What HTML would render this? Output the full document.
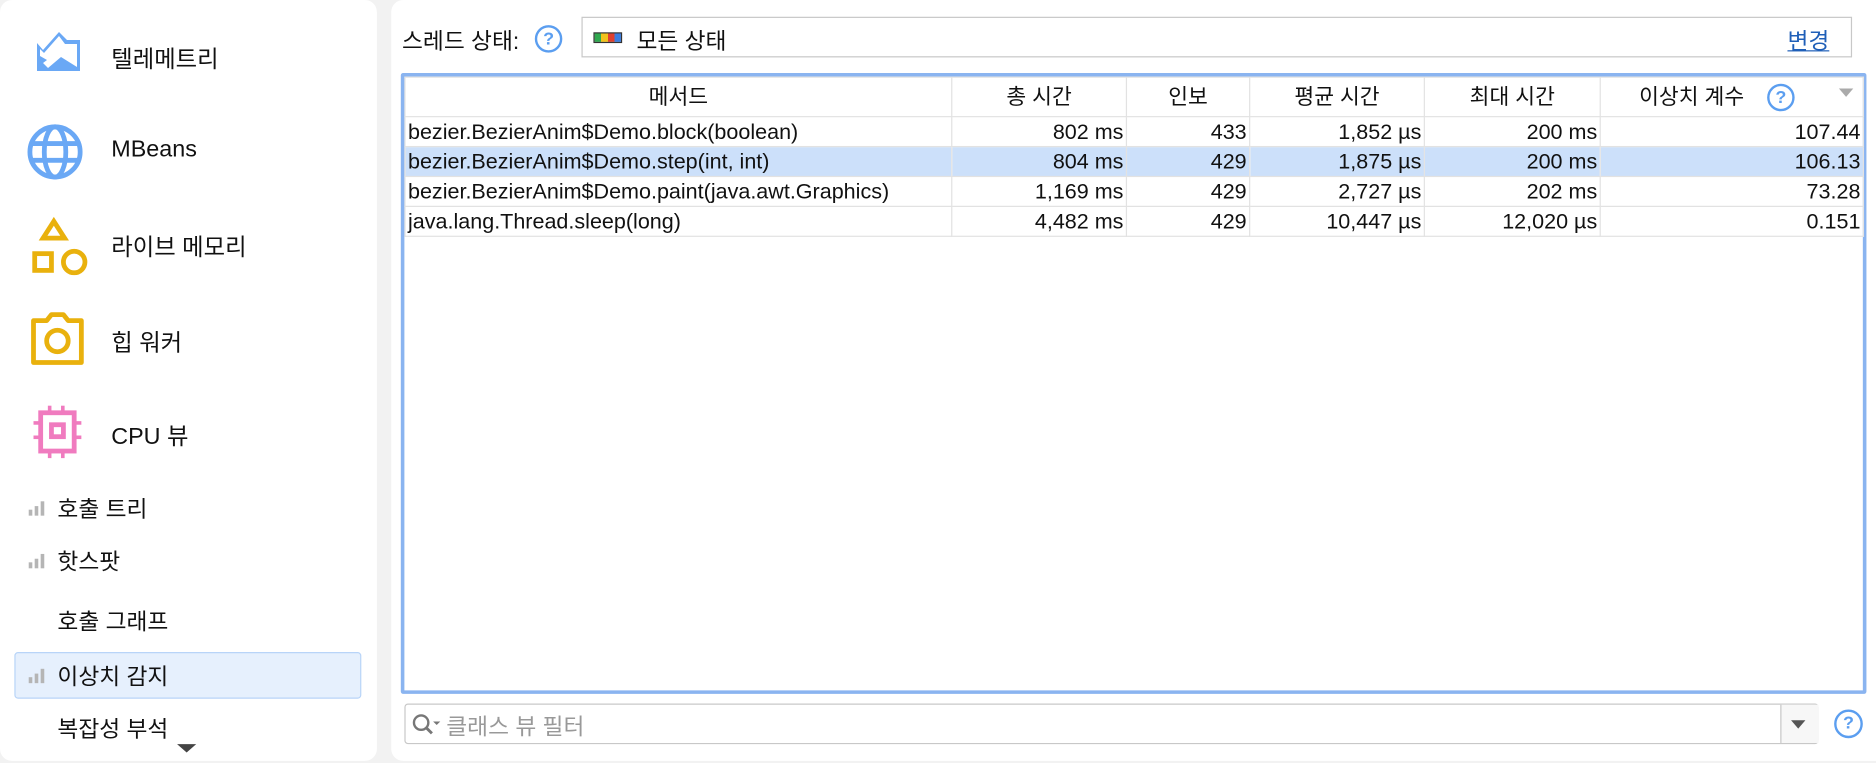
<!DOCTYPE html>
<html><head><meta charset="utf-8"><style>
html,body{margin:0;padding:0;width:1876px;height:763px;overflow:hidden;background:#f2f2f2}
#w{position:absolute;left:0;top:0;width:1568px;height:638px;transform:scale(1.19643);transform-origin:0 0;font-family:"Liberation Sans","Noto Sans CJK KR",sans-serif;color:#111}
.a{position:absolute}
.lp{left:0;top:0;width:315px;height:636px;background:#fff;border-radius:10px}
.rp{left:327px;top:0;width:1241px;height:636px;background:#fff;border-radius:10px 0 0 10px}
.big{font-size:19.5px;left:93px}
.sub{font-size:19px;left:48px}
.bars{left:24px;width:14px;height:12px}
.bars i{position:absolute;bottom:0;width:3px;background:#b5b5b5}
table{border-collapse:collapse;font-size:18px;table-layout:fixed}
td,th{border:1px solid #e2e2e2;padding:0 2px;height:24px;line-height:24px;white-space:nowrap;overflow:hidden}
th{font-weight:normal;height:32px;font-size:18px}
td.r{text-align:right}
tr.sel td{background:#cce0fa}
.q{border:2px solid #5b9ef0;border-radius:50%;color:#5b9ef0;font-size:15px;font-weight:bold;text-align:center;box-sizing:border-box}
</style></head><body><div id="w">
<div class="a lp"></div><div class="a rp"></div>

<svg class="a" style="left:0;top:0" width="83.6" height="75.2" viewBox="0 0 100 90"><path d="M37 43 L43 50 L59 32 L67 40 L80 40 L80 71 L37 71Z" fill="#6aa8f5"/><path d="M40 49 L44 53 L59 36 L65 44 L77 44 L77 67 L61 57 L48 68 L43 63 L47 60 L40 56Z" fill="#fff"/></svg>
<div class="a big" style="top:33px">텔레메트리</div>

<svg class="a" style="left:22px;top:103px" width="48" height="48" viewBox="0 0 48 48"><g fill="none" stroke="#6aa8f5" stroke-width="4"><circle cx="24" cy="24" r="21"/><ellipse cx="24" cy="24" rx="9" ry="21"/><line x1="3" y1="17" x2="45" y2="17"/><line x1="3" y1="31" x2="45" y2="31"/></g></svg>
<div class="a big" style="top:114px">MBeans</div>

<svg class="a" style="left:24px;top:180px" width="50" height="52" viewBox="0 0 50 52"><g fill="none" stroke="#e9b10d" stroke-width="4"><path d="M21 5 L30 19 L12 19 Z"/><rect x="5" y="32" width="14" height="14"/><circle cx="38" cy="39" r="9"/></g></svg>
<div class="a big" style="top:190px">라이브 메모리</div>

<svg class="a" style="left:24px;top:260px" width="50" height="50" viewBox="0 0 50 50"><g fill="none" stroke="#e9b10d" stroke-width="4"><path d="M4 8 L15 8 L19 3 L29 3 L33 8 L44 8 L44 43 L4 43 Z" stroke-linejoin="round"/><circle cx="24" cy="25" r="9"/></g></svg>
<div class="a big" style="top:270px">힙 워커</div>

<svg class="a" style="left:26px;top:339px" width="44" height="44" viewBox="0 0 44 44"><g fill="#f07bbf"><rect x="8" y="6" width="28" height="32" fill="none" stroke="#f07bbf" stroke-width="4"/><rect x="17" y="16" width="10" height="10" fill="none" stroke="#f07bbf" stroke-width="4"/><rect x="14" y="0" width="3" height="6"/><rect x="25" y="0" width="3" height="6"/><rect x="14" y="38" width="3" height="6"/><rect x="25" y="38" width="3" height="6"/><rect x="2" y="13" width="6" height="3"/><rect x="2" y="25" width="6" height="3"/><rect x="36" y="13" width="6" height="3"/><rect x="36" y="25" width="6" height="3"/></g></svg>
<div class="a big" style="top:348px">CPU 뷰</div>

<div class="a bars" style="top:419px"><i style="left:0;height:5px"></i><i style="left:5px;height:8px"></i><i style="left:10px;height:12px"></i></div>
<div class="a sub" style="top:411px">호출 트리</div>
<div class="a bars" style="top:463px"><i style="left:0;height:5px"></i><i style="left:5px;height:8px"></i><i style="left:10px;height:12px"></i></div>
<div class="a sub" style="top:455px">핫스팟</div>
<div class="a sub" style="top:505px">호출 그래프</div>
<div class="a" style="left:12px;top:545px;width:288px;height:37px;background:#e6f0fd;border:1px solid #b8d4f8;border-radius:3px"></div>
<div class="a bars" style="top:559px"><i style="left:0;height:5px"></i><i style="left:5px;height:8px"></i><i style="left:10px;height:12px"></i></div>
<div class="a sub" style="top:551px">이상치 감지</div>
<div class="a" style="left:48px;top:595px;height:25px;overflow:hidden;font-size:19px;width:200px">복잡성 부석</div>
<div class="a" style="left:148px;top:622px;width:0;height:0;border-left:8px solid transparent;border-right:8px solid transparent;border-top:7px solid #444"></div>

<div class="a" style="left:336px;top:20px;font-size:19px">스레드 상태:</div>
<div class="a q" style="left:447px;top:21px;width:23px;height:23px;line-height:19px">?</div>
<div class="a" style="left:486px;top:14px;width:1062px;height:34px;border:1px solid #c8c8c8;box-sizing:border-box"></div>
<div class="a" style="left:496px;top:27px;width:24px;height:9px;border:1px solid #333;box-sizing:border-box;background:linear-gradient(90deg,#2fa84f 0 25%,#f2c21b 25% 50%,#e0402e 50% 75%,#3b7de0 75%)"></div>
<div class="a" style="left:532px;top:20px;font-size:19px">모든 상태</div>
<div class="a" style="left:1494px;top:20px;font-size:19px;color:#1f5fb8;text-decoration:underline">변경</div>

<div class="a" style="left:335px;top:61px;width:1225px;height:519px;border:3px solid #8ab4f0;box-sizing:border-box;border-radius:2px"></div>
<table class="a" style="left:338px;top:64px;width:1219px">
<colgroup><col style="width:457px"><col style="width:146px"><col style="width:103px"><col style="width:146px"><col style="width:147px"><col style="width:220px"></colgroup>
<tr><th>메서드</th><th>총 시간</th><th>인보</th><th>평균 시간</th><th>최대 시간</th><th style="text-align:left;padding-left:32px">이상치 계수</th></tr>
<tr><td>bezier.BezierAnim$Demo.block(boolean)</td><td class="r">802 ms</td><td class="r">433</td><td class="r">1,852 µs</td><td class="r">200 ms</td><td class="r">107.44</td></tr>
<tr class="sel"><td>bezier.BezierAnim$Demo.step(int, int)</td><td class="r">804 ms</td><td class="r">429</td><td class="r">1,875 µs</td><td class="r">200 ms</td><td class="r">106.13</td></tr>
<tr><td>bezier.BezierAnim$Demo.paint(java.awt.Graphics)</td><td class="r">1,169 ms</td><td class="r">429</td><td class="r">2,727 µs</td><td class="r">202 ms</td><td class="r">73.28</td></tr>
<tr><td>java.lang.Thread.sleep(long)</td><td class="r">4,482 ms</td><td class="r">429</td><td class="r">10,447 µs</td><td class="r">12,020 µs</td><td class="r">0.151</td></tr>
</table>
<div class="a q" style="left:1477px;top:70px;width:23px;height:23px;line-height:19px">?</div>
<div class="a" style="left:1537px;top:74px;width:0;height:0;border-left:6px solid transparent;border-right:6px solid transparent;border-top:7px solid #aaa"></div>

<div class="a" style="left:338px;top:588px;width:1182px;height:34px;border:1px solid #c8c8c8;border-radius:3px;box-sizing:border-box"></div>
<div class="a" style="left:1488px;top:589px;width:31px;height:32px;border-left:1px solid #c8c8c8;background:#f7f7f7"></div>
<div class="a" style="left:1497px;top:602px;width:0;height:0;border-left:6px solid transparent;border-right:6px solid transparent;border-top:7px solid #555"></div>
<svg class="a" style="left:344px;top:595px" width="26" height="22" viewBox="0 0 26 22"><circle cx="8" cy="9" r="6" fill="none" stroke="#777" stroke-width="2"/><line x1="12" y1="13" x2="17" y2="18" stroke="#777" stroke-width="2.4"/><path d="M18 8 L24 8 L21 11Z" fill="#777"/></svg>
<div class="a" style="left:373px;top:593px;font-size:19px;color:#999">클래스 뷰 필터</div>
<div class="a q" style="left:1533px;top:593px;width:24px;height:24px;line-height:20px">?</div>
</div></body></html>
